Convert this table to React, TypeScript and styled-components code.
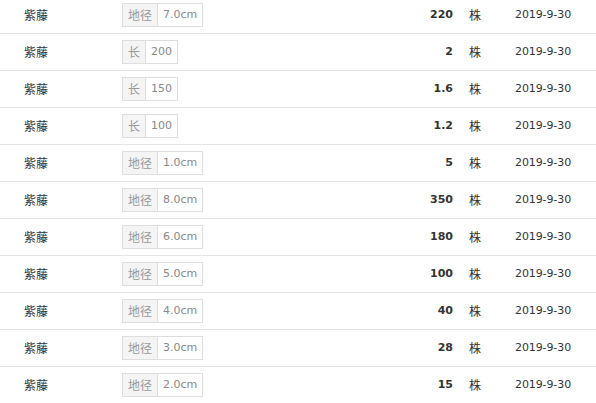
import React, { FC } from "react";
import styled, { createGlobalStyle } from "styled-components";

interface Plant {
  name: string;
  spec: string;
  value: string;
  qty: string;
  unit: string;
  date: string;
}

const rows: Plant[] = [
  { name: "紫藤", spec: "地径", value: "7.0cm", qty: "220", unit: "株", date: "2019-9-30" },
  { name: "紫藤", spec: "长", value: "200", qty: "2", unit: "株", date: "2019-9-30" },
  { name: "紫藤", spec: "长", value: "150", qty: "1.6", unit: "株", date: "2019-9-30" },
  { name: "紫藤", spec: "长", value: "100", qty: "1.2", unit: "株", date: "2019-9-30" },
  { name: "紫藤", spec: "地径", value: "1.0cm", qty: "5", unit: "株", date: "2019-9-30" },
  { name: "紫藤", spec: "地径", value: "8.0cm", qty: "350", unit: "株", date: "2019-9-30" },
  { name: "紫藤", spec: "地径", value: "6.0cm", qty: "180", unit: "株", date: "2019-9-30" },
  { name: "紫藤", spec: "地径", value: "5.0cm", qty: "100", unit: "株", date: "2019-9-30" },
  { name: "紫藤", spec: "地径", value: "4.0cm", qty: "40", unit: "株", date: "2019-9-30" },
  { name: "紫藤", spec: "地径", value: "3.0cm", qty: "28", unit: "株", date: "2019-9-30" },
  { name: "紫藤", spec: "地径", value: "2.0cm", qty: "15", unit: "株", date: "2019-9-30" },
];

const App: FC = () => {
  return (
    <>
      <GlobalStyle />
      <PriceList>
        {rows.map((row, i) => (
          <Row key={i}>
            <Name>{row.name}</Name>
            <SpecCell>
              <Spec>
                <SpecLabel>{row.spec}</SpecLabel>
                <SpecValue>{row.value}</SpecValue>
              </Spec>
            </SpecCell>
            <Qty>{row.qty}</Qty>
            <Unit>{row.unit}</Unit>
            <DateText>{row.date}</DateText>
          </Row>
        ))}
      </PriceList>
    </>
  );
};

const GlobalStyle = createGlobalStyle`
  html, body {
    margin: 0;
    padding: 0;
    background: #fff;
    overflow: hidden;
  }
  body {
    font-family: "Liberation Sans", "Noto Sans CJK SC", sans-serif;
    font-size: 12px;
    color: #333;
  }
`;

const PriceList = styled.div`
  margin-top: -3px;
`;

const Row = styled.div`
  display: grid;
  grid-template-columns: 122px 1fr 60px 62px 81px;
  align-items: center;
  height: 36px;
  border-bottom: 1px solid #e4e4e4;
  line-height: 16px;
`;

const Name = styled.div`
  padding-left: 24px;
  font-family: "Noto Sans CJK SC", sans-serif;
  font-size: 12px;
  color: #333;
`;

const SpecCell = styled.div`
  display: flex;
`;

const Spec = styled.div`
  display: inline-flex;
  height: 22px;
  border: 1px solid #dedede;
  line-height: 22px;
  font-size: 12px;
`;

const SpecLabel = styled.span`
  padding: 0 5px;
  background: #f4f4f4;
  border-right: 1px solid #dedede;
  color: #999;
  font-family: "Noto Sans CJK SC", sans-serif;
`;

const SpecValue = styled.span`
  padding: 0 5px;
  background: #fff;
  color: #888;
  font-family: "DejaVu Sans", sans-serif;
  font-size: 11px;
`;

const Qty = styled.div`
  text-align: right;
  font-family: "DejaVu Sans", sans-serif;
  font-weight: bold;
  font-size: 11px;
  color: #333;
`;

const Unit = styled.div`
  padding-left: 16px;
  font-family: "Noto Sans CJK SC", sans-serif;
  font-size: 12px;
`;

const DateText = styled.div`
  font-family: "DejaVu Sans", sans-serif;
  font-size: 11px;
  letter-spacing: -0.1px;
  color: #333;
`;

export default App;
